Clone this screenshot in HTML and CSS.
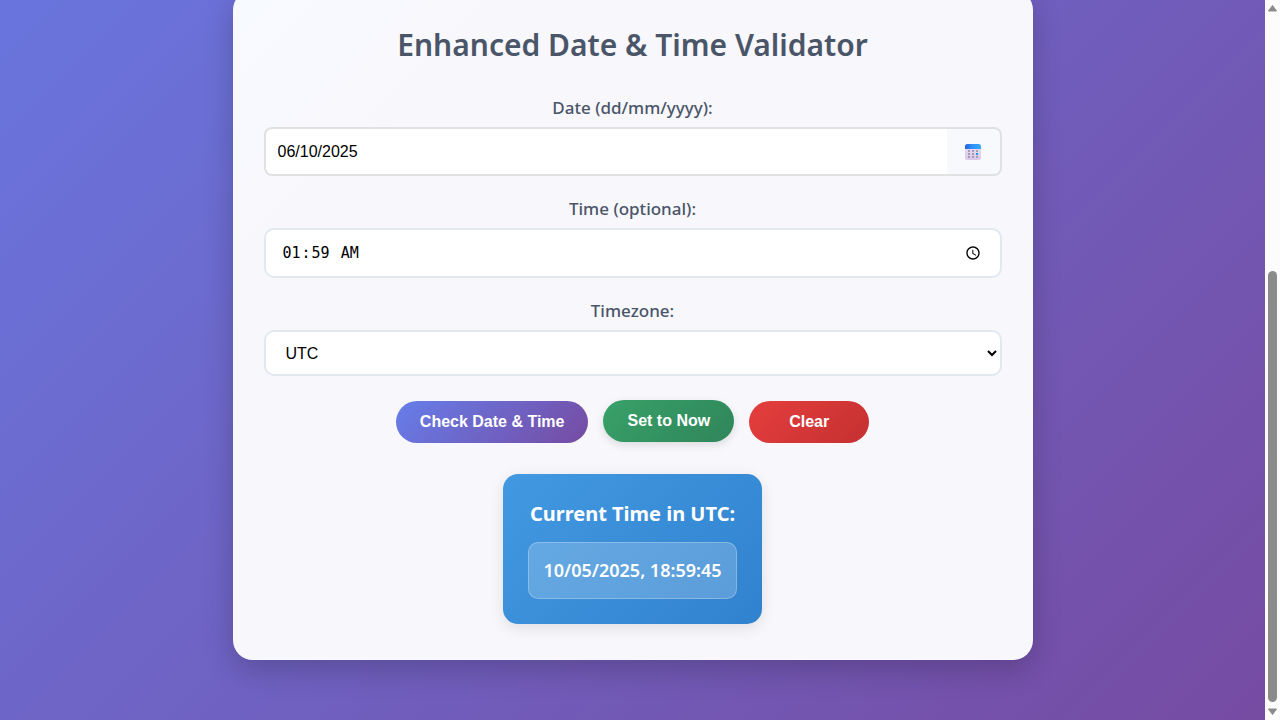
FILE: index.html
```
<!DOCTYPE html>
<html lang="en">
<head>
<meta charset="utf-8">
<title>Enhanced Date &amp; Time Validator</title>
<link rel="stylesheet" href="styles.css">
</head>
<body>
<div class="viewport">
  <main class="page">
    <form class="card">
      <h1 class="title">Enhanced Date &amp; Time Validator</h1>

      <div class="field">
        <label class="label" for="date">Date (dd/mm/yyyy):</label>
        <div class="date-group">
          <input class="date-input" id="date" type="text" value="06/10/2025">
          <button class="date-button" type="button" aria-label="Open calendar">
            <svg width="16" height="16" viewBox="0 0 16 16">
              <defs>
                <linearGradient id="cal-top"><stop offset="0" stop-color="#2463e0"/><stop offset=".5" stop-color="#2f93fb"/><stop offset="1" stop-color="#35a8ff"/></linearGradient>
                <linearGradient id="cal-body" x2="0" y2="1"><stop offset="0" stop-color="#e9e0f3"/><stop offset="1" stop-color="#dac8ea"/></linearGradient>
              </defs>
              <rect width="16" height="16" rx="2.5" fill="url(#cal-body)"/>
              <path d="M0 5V2.500A2.500 2.500 0 0 1 2.500 0h11A2.500 2.500 0 0 1 16 2.500V5z" fill="url(#cal-top)"/>
              <g fill="#a79bb4">
                <rect x="3" y="6" width="2" height="2"/><rect x="7" y="6" width="2" height="2"/><rect x="11" y="6" width="2" height="2"/>
                <rect x="3" y="9" width="2" height="2"/><rect x="7" y="9" width="2" height="2"/>
                <rect x="3" y="12" width="2" height="2"/><rect x="7" y="12" width="2" height="2"/><rect x="11" y="12" width="2" height="2"/>
              </g>
              <rect x="11" y="9" width="2" height="2" fill="#2295f5"/>
            </svg>
          </button>
        </div>
      </div>

      <div class="field">
        <label class="label" for="time">Time (optional):</label>
        <input class="time-input" id="time" type="time" value="01:59">
      </div>

      <div class="field">
        <label class="label" for="zone">Timezone:</label>
        <select class="zone-select" id="zone"><option>UTC</option></select>
      </div>

      <div class="actions">
        <button class="button check" type="button">Check Date &amp; Time</button>
        <button class="button now" type="button">Set to Now</button>
        <button class="button clear" type="button">Clear</button>
      </div>

      <section class="clock">
        <h2 class="clock-title">Current Time in UTC:</h2>
        <div class="clock-value">10/05/2025, 18:59:45</div>
      </section>
    </form>
  </main>
  <div class="scrollbar" aria-hidden="true">
    <svg width="11" height="8" viewBox="0 0 11 8"><path d="M5.500 1.500 9.500 7h-8z" fill="#8b8b8b" stroke="#8b8b8b" stroke-linejoin="round"/></svg>
    <div class="track"><div class="thumb"></div></div>
    <svg width="11" height="8" viewBox="0 0 11 8"><path d="M5.500 6.500 9.500 1h-8z" fill="#8b8b8b" stroke="#8b8b8b" stroke-linejoin="round"/></svg>
  </div>
</div>
</body>
</html>
```
FILE: styles.css
```
* { box-sizing: border-box; }

body {
  margin: 0;
  font-family: "Noto Sans", "Open Sans", sans-serif;
  color: #4a5568;
}

.viewport {
  display: flex;
  height: 100vh;
  overflow: hidden;
}

/* The gradient spans the whole document, of which the lower part is in view. */
.page {
  flex: 1;
  overflow: hidden;
  padding: 0 20px;
  background: linear-gradient(135deg, #667eea 0%, #764ba2 100%) bottom / 100% 158vh no-repeat;
}

/* The page is scrolled down, so the card starts above the window. */
.card {
  max-width: 800px;
  margin: -10px auto 60px;
  padding: 31px 30px 35px;
  border: 1px solid rgba(255, 255, 255, 0.2);
  border-radius: 20px;
  background: linear-gradient(135deg, #f7faff 0%, #f8f7fc 20%, #f7f7fc 100%);
  box-shadow: 0 10px 30px rgba(0, 0, 0, 0.2);
  text-align: center;
}

.title {
  margin: 0 0 26px;
  font-size: 30px;
  font-weight: 600;
  line-height: 46px;
}

.field {
  display: flex;
  flex-direction: column;
  margin-bottom: 19px;
}

.label {
  margin-bottom: 6px;
  font-size: 17px;
  font-weight: 500;
  line-height: 27px;
}

.date-group { display: flex; }

.date-input,
.time-input,
.zone-select {
  min-width: 0;
  background: #fff;
  color: #000;
  font-family: "Liberation Sans", Arial, sans-serif;
  font-size: 16px;
}

.date-input {
  flex: 1;
  height: 49px;
  padding: 0 12px;
  border: 2px solid #e1e1e1;
  border-right: 0;
  border-radius: 8px 0 0 8px;
}

.date-button {
  display: flex;
  align-items: center;
  justify-content: center;
  width: 55px;
  padding: 0;
  border: 2px solid #e1e1e1;
  border-left: 0;
  border-radius: 0 8px 8px 0;
  background: #f8f9fc;
}

.time-input {
  height: 50px;
  padding: 0 16px;
  border: 2px solid #e2e8f0;
  border-radius: 10px;
  font-family: "DejaVu Sans Mono", monospace;
  font-size: 15px;
}

.zone-select {
  height: 46px;
  padding: 0 0 0 16px;
  border: 2px solid #e2e8f0;
  border-radius: 10px;
}

.actions {
  display: flex;
  justify-content: center;
  gap: 15px;
  margin-top: 25px;
}

.button {
  min-width: 120px;
  height: 42px;
  padding: 0 24px;
  border: 0;
  border-radius: 25px;
  color: #fff;
  font-family: "Liberation Sans", Arial, sans-serif;
  font-size: 16px;
  font-weight: 700;
}

.check { background: linear-gradient(135deg, #667eea, #764ba2); }

.now {
  margin: -1px 0 1px;
  background: linear-gradient(135deg, #38a169, #2f855a);
  box-shadow: 0 3px 8px rgba(0, 0, 0, 0.12);
}

.clear { background: linear-gradient(135deg, #e53e3e, #c53030); }

.clock {
  width: fit-content;
  margin: 31px auto 0;
  padding: 25px;
  border-radius: 15px;
  background: linear-gradient(135deg, #4299e1, #3182ce);
  box-shadow: 0 4px 15px rgba(0, 0, 0, 0.1);
  color: #fff;
}

.clock-title {
  margin: 0 0 14px;
  font-size: 20px;
  font-weight: 700;
  line-height: 29px;
}

.clock-value {
  padding: 14px;
  border: 1px solid rgba(255, 255, 255, 0.25);
  border-radius: 10px;
  background: rgba(255, 255, 255, 0.2);
  font-size: 18px;
  font-weight: 600;
  line-height: 27px;
}

.scrollbar {
  display: flex;
  flex-direction: column;
  align-items: center;
  width: 15px;
  padding: 4px 0;
  background: #fcfcfc;
}

.track {
  display: flex;
  flex: 1;
  align-items: flex-end;
  padding: 6px 0;
}

.thumb {
  width: 9px;
  height: 63%;
  border-radius: 5px;
  background: #8b8b8b;
}
```
